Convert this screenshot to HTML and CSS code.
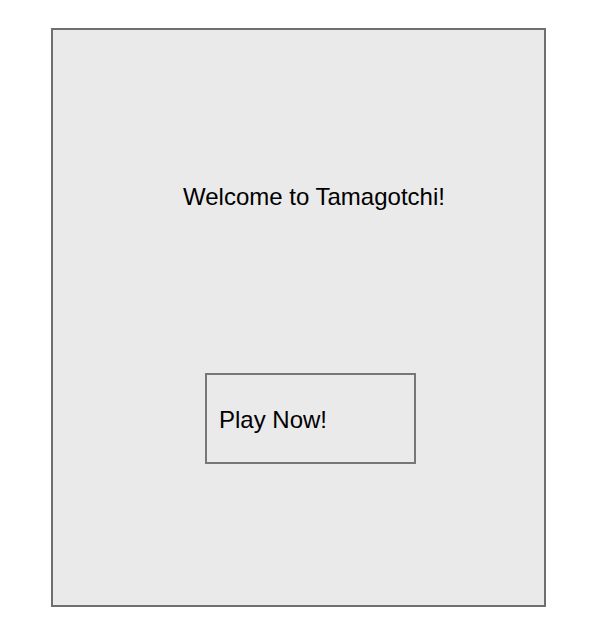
FILE: index.html
```html
<!DOCTYPE html>
<html>
<head>
<meta charset="utf-8">
<link rel="stylesheet" href="styles.css">
</head>
<body>
<div class="screen">
  <div class="welcome">Welcome to Tamagotchi!</div>
  <div class="play">Play Now!</div>
</div>
</body>
</html>
```
FILE: styles.css
```css
html, body {
  margin: 0;
  padding: 0;
  background: #ffffff;
}
body {
  font-family: "Liberation Sans", Arial, sans-serif;
  color: #000;
}
.screen {
  box-sizing: border-box;
  margin: 28px 0 0 51px;
  width: 495px;
  height: 579px;
  background: #eaeaea;
  border: 2px solid #6f6f6f;
  display: flex;
  flex-direction: column;
  align-items: flex-start;
}
.welcome {
  font-size: 24px;
  line-height: 28px;
  margin: 153px 0 0 130px;
  white-space: nowrap;
}
.play {
  box-sizing: border-box;
  margin: 162px 0 0 152px;
  width: 211px;
  height: 91px;
  border: 2px solid #777777;
  display: flex;
  align-items: center;
  padding: 3px 0 0 12px;
  font-size: 24px;
  line-height: 28px;
  white-space: nowrap;
}
```
